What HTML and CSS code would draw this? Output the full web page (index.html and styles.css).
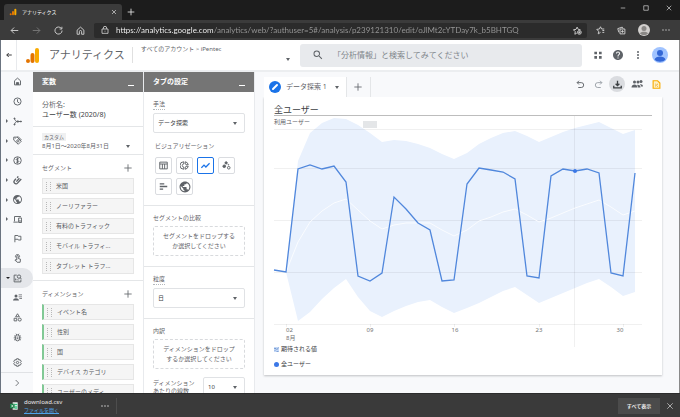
FILE: index.html
```html
<!DOCTYPE html>
<html lang="ja">
<head>
  <meta charset="utf-8">
  <title>アナリティクス</title>
  <link rel="stylesheet" href="styles.css">
</head>
<body>
  <div class="titlebar">
    <div class="browser-tab">
      <svg class="icon-8" viewBox="0 0 24 24"><rect x="16" y="2" width="6" height="20" rx="3" fill="#f9ab00"/><rect x="9" y="9" width="6" height="13" rx="3" fill="#e37400"/><circle cx="5" cy="19" r="3" fill="#e37400"/></svg>
      <span class="browser-tab-title">アナリティクス</span>
      <button class="bare" aria-label="タブを閉じる"><svg class="icon-6 line" viewBox="0 0 24 24"><path d="M4 4l16 16M20 4L4 20"/></svg></button>
    </div>
    <button class="bare new-tab" aria-label="新しいタブ"><svg class="icon-8 line" viewBox="0 0 24 24"><path d="M12 2v20M2 12h20"/></svg></button>
    <div class="window-buttons">
      <button class="bare" aria-label="最小化"><svg class="icon-6 line" viewBox="0 0 24 24"><path d="M3 12h18"/></svg></button>
      <button class="bare" aria-label="最大化"><svg class="icon-6 line" viewBox="0 0 24 24"><path d="M3 3h18v18H3z"/></svg></button>
      <button class="bare" aria-label="閉じる"><svg class="icon-6 line" viewBox="0 0 24 24"><path d="M3 3l18 18M21 3L3 21"/></svg></button>
    </div>
  </div>

  <div class="toolbar">
    <div class="nav-buttons">
      <button class="bare" aria-label="戻る"><svg class="icon-10 line" viewBox="0 0 24 24"><path d="M22 12H3M11 4l-8 8 8 8"/></svg></button>
      <button class="bare dim" aria-label="進む"><svg class="icon-10 line" viewBox="0 0 24 24"><path d="M2 12h19M13 4l8 8-8 8"/></svg></button>
      <button class="bare" aria-label="更新"><svg class="icon-10 line" viewBox="0 0 24 24"><path d="M20 7a9.500 9.500 0 1 0 1.500 5M21 2v6h-6"/></svg></button>
      <button class="bare" aria-label="ホーム"><svg class="icon-10 line" viewBox="0 0 24 24"><path d="M3 11l9-8 9 8v11h-6v-7a3 3 0 0 0-6 0v7H3z"/></svg></button>
    </div>
    <div class="address">
      <svg class="icon-8 line" viewBox="0 0 24 24"><path d="M3 9h18v13H3zM7 9V6a5 5 0 0 1 10 0v3M12 14v3"/></svg>
      <input class="url" type="text" aria-label="アドレス" value="https://analytics.google.com/analytics/web/?authuser=5#/analysis/p239121310/edit/oJlMt2cYTDay7k_b5BHTGQ">
      <button class="bare" aria-label="お気に入りに追加"><svg class="icon-10 line" viewBox="0 0 24 24"><path d="M10 19l-5 3 1-7-5-5 7-1 3-6 3 6 6 1"/><circle cx="17" cy="17" r="5"/><path d="M17 14v6M14 17h6"/></svg></button>
    </div>
    <div class="toolbar-right">
      <button class="bare" aria-label="お気に入り"><svg class="icon-10 line" viewBox="0 0 24 24"><path d="M12 17l-6 4 1-7-5-5 7-1 3-6 3 6h7M17 12h5M17 17h5"/></svg></button>
      <button class="bare" aria-label="コレクション"><svg class="icon-10 line" viewBox="0 0 24 24"><path d="M8 8h13v13H8zM5 17l-3-10 12-4 2 4M14.500 11v7M11 14.500h7"/></svg></button>
      <button class="bare" aria-label="プロファイル"><svg class="icon-12" viewBox="0 0 24 24"><circle cx="12" cy="12" r="12" fill="#d2d0ce"/><circle cx="12" cy="9" r="5" fill="#8a8886"/><path d="M4 19c1-5 15-5 16 0-4 4-12 4-16 0z" fill="#8a8886"/></svg></button>
      <button class="bare" aria-label="設定など"><svg class="icon-8" viewBox="0 0 24 24" fill="currentColor"><circle cx="3" cy="12" r="2"/><circle cx="12" cy="12" r="2"/><circle cx="21" cy="12" r="2"/></svg></button>
    </div>
  </div>

  <div class="app">
    <header class="header">
      <button class="bare back" aria-label="戻る"><svg class="icon-6 line bold" viewBox="0 0 24 24"><path d="M23 12H3M11 4l-8 8 8 8"/></svg></button>
      <div class="brand">
        <svg class="logo" viewBox="0 0 26 30"><rect x="18" y="0" width="8" height="30" rx="4" fill="#f9ab00"/><rect x="9" y="10" width="8" height="20" rx="4" fill="#e37400"/><circle cx="4" cy="26" r="4" fill="#e37400"/></svg>
        <span class="brand-name">アナリティクス</span>
      </div>
      <div class="account">
        <span>すべてのアカウント &gt; iPentec</span>
        <button class="bare account-menu" aria-label="アカウントを選択"><span class="caret"></span></button>
      </div>
      <div class="search">
        <svg class="icon-12" viewBox="0 0 24 24" fill="#5f6368"><path d="M15.500 14h-.79l-.28-.27A6.470 6.470 0 0 0 16 9.500 6.500 6.500 0 1 0 9.500 16c1.610 0 3.090-.59 4.230-1.570l.27.28v.79l5 4.990L20.490 19l-4.990-5zm-6 0C7.010 14 5 11.990 5 9.500S7.010 5 9.500 5 14 7.010 14 9.500 11.990 14 9.500 14z"/></svg>
        <input type="text" aria-label="検索" placeholder="「分析情報」と検索してみてください">
      </div>
      <div class="header-actions">
        <button class="bare" aria-label="アプリ"><svg class="icon-8" viewBox="0 0 24 24" fill="currentColor"><path d="M1 2h8v8H1zM15 2h8v8h-8zM1 15h8v8H1zM15 15h8v8h-8z"/></svg></button>
        <button class="bare" aria-label="ヘルプ"><svg class="icon-12" viewBox="0 0 24 24" fill="currentColor"><path d="M12 2C6.480 2 2 6.480 2 12s4.480 10 10 10 10-4.480 10-10S17.520 2 12 2zm1 17h-2v-2h2v2zm2.070-7.750l-.9.92C13.450 12.900 13 13.500 13 15h-2v-.5c0-1.100.45-2.100 1.170-2.830l1.240-1.260c.37-.36.59-.86.59-1.410 0-1.100-.9-2-2-2s-2 .9-2 2H8c0-2.210 1.790-4 4-4s4 1.790 4 4c0 .88-.36 1.680-.93 2.250z"/></svg></button>
        <button class="bare" aria-label="メニュー"><svg class="icon-8" viewBox="0 0 24 24" fill="currentColor"><circle cx="12" cy="3" r="3"/><circle cx="12" cy="12" r="3"/><circle cx="12" cy="21" r="3"/></svg></button>
        <button class="bare" aria-label="アカウント"><svg class="icon-16" viewBox="0 0 32 32"><circle cx="16" cy="16" r="16" fill="#a0c3ff"/><circle cx="16" cy="12" r="6" fill="#3367d6"/><path d="M5 25c2-8 20-8 22 0-5 6-17 6-22 0z" fill="#3367d6"/></svg></button>
      </div>
    </header>

    <div class="workspace">
      <nav class="sidebar">
        <div class="sidebar-items">
          <a class="side-item" href="#" aria-label="ホーム"><svg class="icon-10 line" viewBox="0 0 24 24"><path d="M4 10l8-7 8 7v11H4z"/><path d="M9 21v-6h6v6" fill="currentColor"/></svg></a>
          <a class="side-item" href="#" aria-label="リアルタイム"><svg class="icon-10 line" viewBox="0 0 24 24"><circle cx="12" cy="12" r="9.500"/><path d="M12 6v7l5 3"/></svg></a>
          <a class="side-item parent" href="#" aria-label="ライフサイクル"><svg class="icon-10 line" viewBox="0 0 24 24"><path d="M4 4c1 5 4 8 7 8M4 20c1-5 4-8 7-8h11"/><g fill="currentColor"><circle cx="4" cy="4" r="1.500"/><circle cx="4" cy="20" r="1.500"/><circle cx="13" cy="12" r="2"/><circle cx="21" cy="12" r="1.500"/></g></svg></a>
          <a class="side-item parent" href="#" aria-label="集客"><svg class="icon-10 line" viewBox="0 0 24 24"><path d="M2 3h9l11 11-8 8L2 11z"/><circle cx="13" cy="13" r="3"/><path d="M5 6h2M11 3l3-1 9 9"/></svg></a>
          <a class="side-item parent" href="#" aria-label="収益化"><svg class="icon-10 line" viewBox="0 0 24 24"><circle cx="12" cy="12" r="10"/><path d="M15.500 8c-2-2-7-1-7 1.500s7 2 7 5-5.500 3.500-7.500 1M12 4v16"/></svg></a>
          <a class="side-item parent" href="#" aria-label="維持率"><svg class="icon-10 line bold" viewBox="0 0 24 24"><path d="M8 7l-4 5a5 5 0 0 0 8 7l10-11M14 1l-3 4M17 6l-8 9"/></svg></a>
          <a class="side-item parent" href="#" aria-label="ユーザー属性"><svg class="icon-10" viewBox="2 2 20 20" fill="currentColor"><path d="M12 2C6.480 2 2 6.480 2 12s4.480 10 10 10 10-4.480 10-10S17.520 2 12 2zm-1 17.930c-3.950-.49-7-3.850-7-7.930 0-.62.08-1.210.21-1.790L9 15v1c0 1.100.9 2 2 2v1.930zm6.900-2.540c-.26-.81-1-1.390-1.900-1.390h-1v-3c0-.55-.45-1-1-1H8v-2h2c.55 0 1-.45 1-1V7h2c1.100 0 2-.9 2-2v-.41c2.930 1.190 5 4.060 5 7.410 0 2.080-.8 3.970-2.100 5.390z"/></svg></a>
          <a class="side-item parent" href="#" aria-label="テクノロジー"><svg class="icon-10 line" viewBox="0 0 24 24"><path d="M21 4H4v13M1 19h12M15 8h8v12h-8zM15 16h8"/></svg></a>
          <a class="side-item" href="#" aria-label="コンバージョン"><svg class="icon-10 line" viewBox="0 0 24 24"><path d="M5 22V4h8l1 2h7v10h-7l-1-2H5"/></svg></a>
          <a class="side-item" href="#" aria-label="イベント"><svg class="icon-10 line" viewBox="0 0 24 24"><path d="M10 16V6a2 2 0 0 1 4 0v6l6 2-1 8h-8l-6-6 2-1z"/><path d="M7 9a5.500 5.500 0 1 1 10 0"/></svg></a>
          <a class="side-item open active" href="#" aria-label="分析"><svg class="icon-10 line" viewBox="0 0 24 24"><path d="M10 3H3v18h18v-6M7 12v5M11 14v3M15 15v2"/><circle cx="16" cy="7" r="4.500"/><path d="M19 10l4 4"/></svg></a>
          <a class="side-item" href="#" aria-label="オーディエンス"><svg class="icon-10" viewBox="0 0 24 24" fill="currentColor"><circle cx="8" cy="8" r="4"/><path d="M0 20c1-8 15-8 16 0zM15 4h9v2h-9zM15 9h9v2h-9zM17 14h7v2h-7z"/></svg></a>
          <a class="side-item" href="#" aria-label="カスタム定義"><svg class="icon-10 line" viewBox="0 0 24 24"><path d="M12 2l5 8H7zM3 14h7v7H3z"/><circle cx="18" cy="17.500" r="4"/></svg></a>
          <a class="side-item" href="#" aria-label="DebugView"><svg class="icon-10 line" viewBox="0 0 24 24"><rect x="7" y="5" width="10" height="16" rx="5"/><path d="M8 2l2 3M16 2l-2 3M3 8h4M17 8h4M2 13h5M17 13h5M3 18h4M17 18h4M10 11h4M10 15h4"/></svg></a>
        </div>
        <a class="side-item side-settings" href="#" aria-label="管理"><svg class="icon-10 line" viewBox="0 0 24 24"><path d="M9.500 2h5l1 3.500L19 4.500l3 4.500-2.500 3 2.500 3-3 4.500-3.500-1-1 3.500h-5l-1-3.500-3.500 1L2 15l2.500-3L2 9l3-4.500 3.500 1z"/><circle cx="12" cy="12" r="3"/></svg></a>
        <button class="bare side-expand" aria-label="展開"><svg class="icon-8 line" viewBox="0 0 24 24"><path d="M8 3l9 9-9 9"/></svg></button>
      </nav>

      <section class="panel">
        <div class="panel-head"><h2>変数</h2><button class="bare" aria-label="変数を最小化"><span class="minimize"></span></button></div>
        <div class="panel-section analysis">
          <label for="analysisName">分析名:</label>
          <input type="text" id="analysisName" value="ユーザー数 (2020/8)">
        </div>
        <div class="panel-section period">
          <span class="badge">カスタム</span>
          <button class="bare period-button"><span>8月1日～2020年8月31日</span><span class="caret"></span></button>
        </div>
        <div class="panel-section variables">
          <div class="section-head"><h3>セグメント</h3><button class="bare" aria-label="セグメントを追加"><svg class="icon-8 line" viewBox="0 0 24 24"><path d="M12 1v22M1 12h22"/></svg></button></div>
          <ul class="chips">
            <li class="chip">米国</li>
            <li class="chip">ノーリファラー</li>
            <li class="chip">有料のトラフィック</li>
            <li class="chip">モバイル トラフィ...</li>
            <li class="chip">タブレット トラフ...</li>
          </ul>
        </div>
        <div class="panel-section variables">
          <div class="section-head"><h3>ディメンション</h3><button class="bare" aria-label="ディメンションを追加"><svg class="icon-8 line" viewBox="0 0 24 24"><path d="M12 1v22M1 12h22"/></svg></button></div>
          <ul class="chips">
            <li class="chip dimension">イベント名</li>
            <li class="chip dimension">性別</li>
            <li class="chip dimension">国</li>
            <li class="chip dimension">デバイス カテゴリ</li>
            <li class="chip dimension">ユーザーのメディ...</li>
          </ul>
        </div>
      </section>

      <section class="panel">
        <div class="panel-head"><h2>タブの設定</h2><button class="bare" aria-label="タブの設定を最小化"><span class="minimize"></span></button></div>
        <div class="panel-section setting">
          <label class="hint" for="technique">手法</label>
          <div class="select">
            <select id="technique"><option>データ探索</option></select>
            <span class="caret"></span>
          </div>
          <h3 class="visual-title">ビジュアリゼーション</h3>
          <div class="visuals">
            <button class="visual" aria-label="表"><svg class="icon-10 line" viewBox="0 0 24 24"><path d="M2 3h20v18H2zM2 8h20M9 8v13M15 8v13"/></svg></button>
            <button class="visual" aria-label="ドーナツグラフ"><svg class="icon-10 line" viewBox="0 0 24 24"><path d="M10 2a10 10 0 0 0 0 20v-6a4 4 0 0 1 0-8zM14 2a10 10 0 0 1 8 8h-6l-2-2zM22 14a10 10 0 0 1-8 8v-6l2-2z"/></svg></button>
            <button class="visual selected" aria-label="折れ線グラフ"><svg class="icon-10 line bold" viewBox="0 0 24 24"><path d="M1 18l7-7 5 5L23 6"/></svg></button>
            <button class="visual" aria-label="散布図"><svg class="icon-10 line" viewBox="0 0 24 24"><circle cx="6" cy="14" r="3.500" fill="currentColor"/><circle cx="11" cy="5" r="3" fill="currentColor"/><circle cx="18" cy="18" r="3.500"/><circle cx="17" cy="10" r="1"/></svg></button>
            <button class="visual" aria-label="棒グラフ"><svg class="icon-10 line bold" viewBox="0 0 24 24"><path d="M2 5h12M2 12h20M2 19h9"/></svg></button>
            <button class="visual" aria-label="地図"><svg class="icon-12" viewBox="1 1 22 22" fill="currentColor"><path d="M12 2C6.480 2 2 6.480 2 12s4.480 10 10 10 10-4.480 10-10S17.520 2 12 2zm-1 17.930c-3.950-.49-7-3.850-7-7.930 0-.62.08-1.210.21-1.790L9 15v1c0 1.100.9 2 2 2v1.930zm6.900-2.540c-.26-.81-1-1.390-1.900-1.390h-1v-3c0-.55-.45-1-1-1H8v-2h2c.55 0 1-.45 1-1V7h2c1.100 0 2-.9 2-2v-.41c2.930 1.190 5 4.060 5 7.410 0 2.080-.8 3.970-2.100 5.390z"/></svg></button>
          </div>
        </div>
        <div class="panel-section setting">
          <h3>セグメントの比較</h3>
          <div class="dropzone">セグメントをドロップする<br>か選択してください</div>
        </div>
        <div class="panel-section setting">
          <label class="hint" for="granularity">粒度</label>
          <div class="select">
            <select id="granularity"><option>日</option></select>
            <span class="caret"></span>
          </div>
        </div>
        <div class="panel-section setting">
          <h3>内訳</h3>
          <div class="dropzone">ディメンションをドロップ<br>するか選択してください</div>
          <div class="lines-row">
            <label class="hint" for="lines">ディメンション<br>あたりの線数</label>
            <div class="select">
              <select id="lines"><option>10</option></select>
              <span class="caret"></span>
            </div>
          </div>
        </div>
      </section>

      <main class="canvas">
        <div class="canvas-bar">
          <button class="report-tab">
            <svg class="icon-12" viewBox="0 0 24 24"><circle cx="12" cy="12" r="12" fill="#1a73e8"/><path d="M8 16l8-8" stroke="#fff" stroke-width="4" stroke-linecap="round"/></svg>
            <span>データ探索 1</span>
            <span class="caret"></span>
          </button>
          <button class="add-tab" aria-label="タブを追加"><svg class="icon-8 line" viewBox="0 0 24 24"><path d="M12 1v22M1 12h22"/></svg></button>
          <div class="canvas-actions">
            <button class="bare" aria-label="元に戻す"><svg class="icon-10 line" viewBox="0 0 24 24"><path d="M8 2L3 7l5 5M3 7h11a6 6 0 0 1 0 13H6"/></svg></button>
            <button class="bare faded" aria-label="やり直す"><svg class="icon-10 line" viewBox="0 0 24 24"><path d="M16 2l5 5-5 5M21 7H10a6 6 0 0 0 0 13h8"/></svg></button>
            <button class="bare download" aria-label="データをエクスポート"><svg class="icon-10 line bold" viewBox="0 0 24 24"><path d="M12 2v12M7 10l5 5 5-5M2 15v6h20v-6"/></svg></button>
            <button class="bare" aria-label="共有"><svg class="icon-12" viewBox="0 0 24 24" fill="currentColor"><circle cx="7" cy="8" r="3"/><circle cx="14" cy="8" r="3"/><circle cx="20" cy="7" r="3"/><path d="M1 19c0-8 12-8 12 0zM14 19c0-3-1-4-2-5 4-1 7 1 7 5zM20 17c0-2-1-3-2-4 3-1 6 1 6 4z"/></svg></button>
            <button class="bare" aria-label="サンプリング"><svg class="icon-10" viewBox="0 0 24 24"><path d="M3 2h12l6 6v14H3z" fill="#fef0c3" stroke="#f9ab00" stroke-width="3"/><path d="M8 17l8-7M8 11h2M14 17h2" stroke="#e39400" stroke-width="2"/></svg></button>
          </div>
        </div>

        <article class="card">
          <h1>全ユーザー</h1>
          <svg class="chart" viewBox="0 0 378 227" role="img" aria-label="利用ユーザー">
            <polygon class="band" points="12,156 24,45 36,17 48,7 60,2 72,3 84,9 96,17 108,26 120,24 132,25 144,28 156,32 168,38 180,43 193,37 205,28 217,22 229,17 241,15 253,20 265,26 277,21 289,16 301,12 313,9 325,6 337,12 349,18 361,14 361,176 349,180 337,171 325,163 313,167 301,172 289,177 277,182 265,187 253,179 241,171 229,175 217,181 205,187 193,192 180,197 168,191 156,184 144,186 132,190 120,195 108,201 96,195 84,181 72,163 60,172 48,183 36,196 24,205"/>
            <path class="grid" d="M0 13.500h368M0 52.500h368M0 104.500h368M0 156.500h368M0 208.500h368M300.500 0v231M12.500 208v3M96.500 208v3M180.500 208v3M265.500 208v3M349.500 208v3"/>
            <rect class="marker" x="89" y="5" width="14" height="7"/>
            <polyline class="expected" points="12,156 24,126 36,106 48,95 60,87 72,83 84,94 96,105 108,113 120,109 132,107 144,107 156,107 168,114 180,120 193,114 205,105 217,101 229,96 241,93 253,99 265,106 277,102 289,97 301,92 313,88 325,84 337,91 349,99 361,95"/>
            <polyline class="users" points="0,154 12,156 24,53 36,49 48,53 60,50 72,66 84,160 96,165 108,157 120,81 132,93 144,107 156,114 168,165 180,164 193,68 205,52 217,54 229,56 241,63 253,160 265,162 277,60 289,53 301,55 313,53 325,57 337,157 349,160 361,57"/>
            <circle class="point" cx="301" cy="55" r="2"/>
            <text x="0" y="8">利用ユーザー</text>
            <text class="axis" x="12" y="216">02</text>
            <text class="axis" x="12" y="224">8月</text>
            <text class="axis middle" x="96" y="216">09</text>
            <text class="axis middle" x="181" y="216">16</text>
            <text class="axis middle" x="265" y="216">23</text>
            <text class="axis middle" x="346" y="216">30</text>
          </svg>
          <ul class="legend">
            <li><svg class="swatch" viewBox="0 0 10 10"><path d="M0 0h10v10H0z" fill="#c5d9f7"/><path d="M0 3h4l2 2 3-4M1 8l3-3M5 9h4" stroke="#3c6cb4" fill="none"/></svg>期待される値</li>
            <li><svg class="swatch" viewBox="0 0 10 10"><circle cx="5" cy="5" r="5" fill="#3b78e7"/></svg>全ユーザー</li>
          </ul>
        </article>
      </main>
    </div>
  </div>

  <footer class="downloads">
    <svg class="icon-8" viewBox="0 0 24 24"><path d="M8 1h15v22H8z" fill="#fff"/><path d="M14 5h8v4h-8zM14 11h8v3h-8zM14 16h8v4h-8z" fill="#33c481"/><path d="M0 5h14v14H0z" fill="#107c41"/><path d="M4 8l6 8M10 8l-6 8" stroke="#fff" stroke-width="2"/></svg>
    <div class="download-file">
      <span>download.csv</span>
      <a href="#">ファイルを開く</a>
    </div>
    <button class="bare download-more" aria-label="その他"><svg class="icon-8" viewBox="0 0 24 24" fill="currentColor"><circle cx="3" cy="12" r="2"/><circle cx="12" cy="12" r="2"/><circle cx="21" cy="12" r="2"/></svg></button>
    <button class="show-all">すべて表示</button>
    <button class="bare" aria-label="閉じる"><svg class="icon-6 line" viewBox="0 0 24 24"><path d="M1 1l22 22M23 1L1 23"/></svg></button>
  </footer>
</body>
</html>
```
FILE: styles.css
```css
* {
  box-sizing: border-box;
}

body {
  margin: 0;
  height: 100vh;
  display: flex;
  flex-direction: column;
  overflow: hidden;
  font-family: "Noto Sans", "Noto Sans CJK JP", sans-serif;
  font-size: 6px;
  line-height: 8px;
  color: #5f6368;
  background: #fff;
}

h1, h2, h3, ul {
  margin: 0;
  padding: 0;
  font-weight: 400;
  font-size: inherit;
  list-style: none;
}

button, input, select {
  font: inherit;
  color: inherit;
  margin: 0;
  padding: 0;
  border: none;
  border-radius: 0;
  background: none;
  outline: none;
  min-width: 0;
}

button {
  cursor: pointer;
}

svg {
  display: block;
  flex-shrink: 0;
}

.bare {
  display: flex;
  align-items: center;
  justify-content: center;
}

.icon-6 { width: 6px; height: 6px; }
.icon-8 { width: 8px; height: 8px; }
.icon-10 { width: 9px; height: 9px; }
.icon-12 { width: 12px; height: 12px; }
.icon-16 { width: 16px; height: 16px; }

.line {
  fill: none;
  stroke: currentColor;
  stroke-width: 2.5;
}

.line.bold {
  stroke-width: 3.5;
}

.caret {
  width: 0;
  height: 0;
  border: 2px solid transparent;
  border-top: 3px solid #5f6368;
  border-bottom: none;
}

/* browser window */
.titlebar {
  display: flex;
  align-items: flex-end;
  height: 20px;
  padding-left: 4px;
  background: #1c1c1c;
  color: #e8e8e8;
}

.browser-tab {
  display: flex;
  align-items: center;
  gap: 5px;
  width: 118px;
  height: 16px;
  padding: 0 5px;
  background: #3b3b3b;
  border-radius: 3px 3px 0 0;
}

.browser-tab-title {
  flex: 1;
  font-size: 5px;
  color: #fff;
}

.new-tab {
  width: 18px;
  height: 16px;
}

.window-buttons {
  display: flex;
  align-self: stretch;
  align-items: flex-start;
  gap: 17px;
  margin-left: auto;
  padding: 5px 8px 0 0;
}

.toolbar {
  display: flex;
  align-items: center;
  height: 20px;
  padding: 0 10px;
  background: #3b3b3b;
  color: #d0d0d0;
}

.nav-buttons {
  display: flex;
  gap: 13px;
}

.dim {
  color: #777;
}

.address {
  flex: 1;
  display: flex;
  align-items: center;
  gap: 7px;
  height: 15px;
  margin-left: 9px;
  padding: 0 5px 0 7px;
  background: #2b2b2b;
  border-radius: 2px;
}

/* the path is dimmer than the host */
.url {
  flex: 1;
  height: 12px;
  font-family: Lato, "Noto Sans", sans-serif;
  font-size: 8px;
  color: transparent;
  background: linear-gradient(90deg, #fff 98px, #999 98px);
  background-clip: text;
  -webkit-background-clip: text;
}

.toolbar-right {
  display: flex;
  align-items: center;
  gap: 12px;
  margin-left: 9px;
  color: #d0d0d0;
}

/* application */
.app {
  flex: 1;
  min-height: 0;
  display: flex;
  flex-direction: column;
  border-left: 1px solid #6b7480;
  border-right: 1px solid #8a8a8a;
}

.header {
  display: flex;
  align-items: center;
  height: 32px;
  padding-right: 11px;
  border-bottom: 2px solid #eceef0;
}

.back {
  align-self: stretch;
  width: 16px;
  color: #202124;
  border-right: 1px solid #e8eaed;
}

.brand {
  display: flex;
  align-items: center;
  gap: 10px;
  margin-left: 9px;
}

.logo {
  width: 13px;
  height: 15px;
}

.brand-name {
  font-size: 11px;
  line-height: 16px;
  white-space: nowrap;
}

.account {
  flex: 1;
  display: flex;
  justify-content: space-between;
  height: 16px;
  min-width: 158px;
  margin-left: 7px;
  padding-left: 8px;
  border-left: 1px solid #e0e0e0;
  line-height: 4px;
  white-space: nowrap;
}

.account-menu {
  align-self: flex-end;
  height: 8px;
}

.search {
  flex: 0 1 282px;
  display: flex;
  align-items: center;
  gap: 9px;
  height: 23px;
  margin-left: 10px;
  padding: 0 12px;
  background: #e8eaed;
  border-radius: 3px;
}

.search input {
  flex: 1;
  font-size: 8px;
  line-height: 12px;
}

.search input::placeholder {
  color: #80868b;
}

.header-actions {
  display: flex;
  align-items: center;
  gap: 10px;
  margin-left: 12px;
}

.workspace {
  flex: 1;
  min-height: 0;
  display: flex;
  background: #f8f9fb;
}

/* left navigation */
.sidebar {
  display: flex;
  flex-direction: column;
  width: 32px;
  color: #5f6368;
}

.sidebar-items {
  flex: 1;
  display: flex;
  flex-direction: column;
}

.side-item {
  flex: 1;
  display: flex;
  align-items: center;
  gap: 5px;
  padding-left: 12px;
  color: inherit;
}

.side-item.parent,
.side-item.open {
  padding-left: 5px;
}

.side-item.parent::before {
  content: "";
  border: 2px solid transparent;
  border-left-color: #5f6368;
  border-right: none;
}

.side-item.open {
  gap: 3px;
}

.side-item.open::before {
  content: "";
  border: 2px solid transparent;
  border-top-color: #202124;
  border-bottom: none;
}

.side-item.active {
  background: #e4e6ea;
  border-radius: 0 10px 10px 0;
}

.side-settings {
  flex: none;
  height: 26px;
  padding-top: 6px;
  border-bottom: 1px solid #e0e2e5;
}

.side-expand {
  height: 20px;
}

/* variable and settings panels */
.panel {
  width: 111px;
  overflow: hidden;
  background: #fff;
  border-right: 1px solid #e8eaed;
}

.panel-head {
  display: flex;
  justify-content: space-between;
  height: 20px;
  padding: 6px 9px;
  background: #757575;
  color: #fff;
}

.panel-head h2 {
  font-size: 7px;
  font-weight: 700;
}

.minimize {
  width: 6px;
  margin-top: 7px;
  border-bottom: 1px solid #fff;
}

.panel-section {
  padding: 8px 9px;
  border-bottom: 1px solid #e4e6e8;
}

.panel-section:last-child {
  border-bottom: none;
}

.analysis {
  display: flex;
  flex-direction: column;
  padding-bottom: 6px;
  font-size: 7px;
  line-height: 10px;
}

.analysis input {
  height: 10px;
  color: #3c4043;
}

.period {
  padding-top: 6px;
  padding-bottom: 4px;
}

.badge {
  display: block;
  width: fit-content;
  padding: 0 2px;
  font-size: 5px;
  background: #eff0f1;
}

.period-button {
  justify-content: space-between;
  width: 100%;
  padding-right: 4px;
  margin-top: 1px;
  white-space: nowrap;
}

.variables {
  padding-top: 8px;
  padding-bottom: 6px;
}

.section-head {
  display: flex;
  align-items: center;
  justify-content: space-between;
  height: 10px;
  padding-right: 2px;
  margin-bottom: 5px;
}

.chips {
  display: flex;
  flex-direction: column;
  gap: 4px;
}

.chip {
  display: flex;
  align-items: center;
  gap: 5px;
  height: 16px;
  padding-left: 3px;
  background: #f5f5f5;
  border: 1px solid #e6e6e6;
  color: #55595e;
  white-space: nowrap;
}

.chip::before {
  content: "";
  width: 3px;
  height: 9px;
  border: 1px dotted #b8b8b8;
  border-top: none;
  border-bottom: none;
}

.chip.dimension {
  border-left: 2px solid #81c995;
}

.setting {
  padding: 8px 9px 10px;
}

.hint {
  display: block;
  width: fit-content;
  padding-bottom: 1px;
  margin-bottom: 3px;
  border-bottom: 1px dotted #b4b8bc;
}

.select {
  display: grid;
  align-items: center;
  height: 20px;
  border: 1px solid #e0e2e5;
  border-radius: 2px;
}

.select select,
.select .caret {
  grid-area: 1 / 1;
}

.select select {
  height: 18px;
  padding-left: 4px;
  appearance: none;
  color: #3c4043;
}

.select .caret {
  justify-self: end;
  margin-right: 7px;
  pointer-events: none;
}

.visual-title {
  margin: 9px 0 7px 2px;
}

.visuals {
  display: flex;
  flex-wrap: wrap;
  gap: 4px;
  margin-left: 2px;
}

.visual {
  display: flex;
  align-items: center;
  justify-content: center;
  width: 17px;
  height: 17px;
  border: 1px solid #dadce0;
  border-radius: 2px;
}

.visual.selected {
  color: #1a73e8;
  border-color: #1a73e8;
}

.dropzone {
  margin-top: 4px;
  padding: 4px 0;
  border: 1px dashed #d8dadd;
  border-radius: 2px;
  line-height: 10px;
  text-align: center;
  white-space: nowrap;
}

.lines-row {
  display: flex;
  justify-content: space-between;
  margin-top: 8px;
}

.lines-row .hint {
  padding-top: 2px;
}

.lines-row .select {
  width: 42px;
}

/* report */
.canvas {
  flex: 1;
  min-width: 0;
  padding: 5px 17px 0 9px;
}

.canvas-bar {
  display: flex;
  height: 20px;
}

.report-tab {
  display: flex;
  align-items: center;
  gap: 5px;
  padding: 0 7px 0 5px;
  background: #fff;
  font-size: 7px;
  white-space: nowrap;
}

.report-tab .caret {
  margin-left: 3px;
}

.add-tab {
  display: flex;
  align-items: center;
  justify-content: center;
  width: 25px;
  border-left: 1px solid #e4e6e8;
  border-right: 1px solid #e4e6e8;
}

.canvas-actions {
  display: flex;
  align-items: center;
  gap: 9px;
  margin-left: auto;
  padding-right: 1px;
  height: 14px;
}

.faded {
  color: #9aa0a6;
}

.download {
  width: 16px;
  height: 16px;
  margin: 0 -3px;
  color: #3c4043;
  background: #dadce0;
  border-radius: 50%;
}

.card {
  padding: 7px 10px;
  background: #fff;
  box-shadow: 0 1px 2px rgba(60, 64, 67, 0.3);
  clip-path: inset(0 -2px -3px -2px);
}

.card h1 {
  font-size: 9px;
  line-height: 11px;
  color: #3c4043;
  border-bottom: 1px solid #bdbdbd;
}

.chart {
  width: 100%;
  overflow: visible;
}

.chart text {
  font-size: 6px;
  fill: #5f6368;
}

.chart .axis {
  fill: #757575;
}

.chart .middle {
  text-anchor: middle;
}

.band {
  fill: #e9f1fd;
}

.grid {
  stroke: rgba(0, 0, 0, 0.06);
}

.marker {
  fill: #e4e6e8;
}

.expected {
  fill: none;
  stroke: #fafcff;
}

.users {
  fill: none;
  stroke: #5087dc;
  stroke-width: 1.3;
}

.point {
  fill: #3b78e7;
}

.legend {
  display: flex;
  flex-direction: column;
  gap: 7px;
  margin-top: 2px;
  color: #3c4043;
}

.legend li {
  display: flex;
  align-items: center;
  gap: 2px;
}

.swatch {
  width: 5px;
  height: 5px;
}

/* download bar */
.downloads {
  display: flex;
  align-items: center;
  height: 24px;
  padding: 0 7px 0 10px;
  background: #3a3a3a;
  border-top: 1px solid #2c2c2c;
  color: #e8e8e8;
}

.download-file {
  display: flex;
  flex-direction: column;
  width: 70px;
  margin-left: 6px;
}

.download-file a {
  font-size: 5px;
  color: #4ea3e8;
}

.download-more {
  width: 23px;
  height: 16px;
  border-right: 1px solid #4d4d4d;
}

.show-all {
  width: 42px;
  height: 16px;
  margin-left: auto;
  margin-right: 7px;
  background: #4b4b4b;
  font-size: 5px;
  font-weight: 700;
}
```
